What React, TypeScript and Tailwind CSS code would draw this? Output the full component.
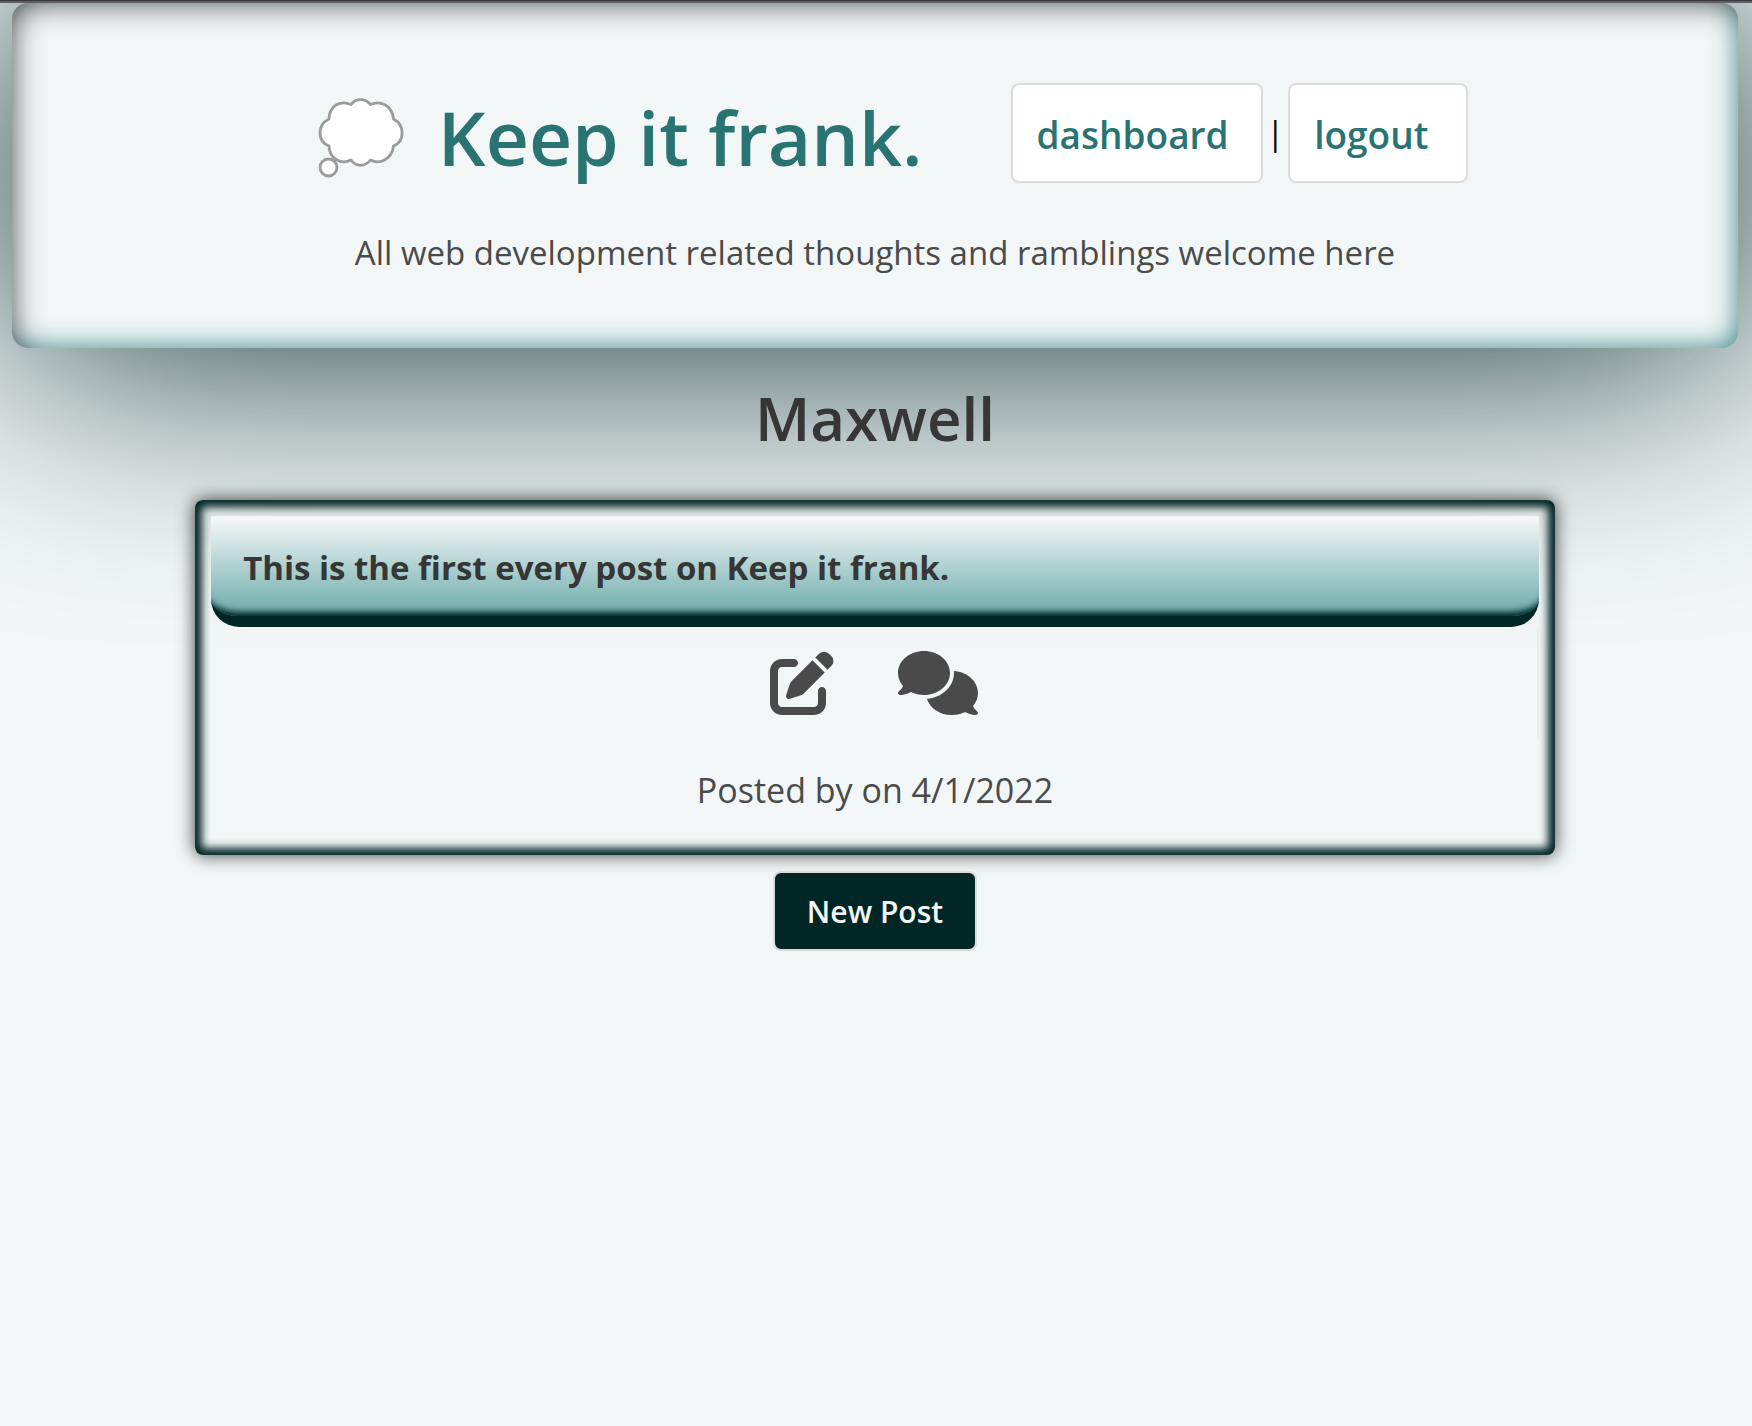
import React from "react";
import { FaComments, FaPenToSquare } from "react-icons/fa6";

function ThoughtCloud() {
  return (
    <svg viewBox="0 0 86 80" className="h-20 w-[86px] shrink-0" role="img" aria-label="thought balloon">
      <g fill="#fff" stroke="#9b9b9b" strokeWidth="2.8" strokeLinejoin="round">
        <path d="M33 6.500C38 0 47 0 52.500 6.500C62 2 74 7 75.500 21C87 27 87 43 75.500 48C74 61 62 67 52.500 62C47 69 38 69 33 62C23 67 11.500 61 11 48C-1 43-1 27 11 21C11.500 7 23 2 33 6.500Z" />
        <ellipse cx="10.500" cy="69.500" rx="8.500" ry="8.500" />
      </g>
    </svg>
  );
}

function NavLink({ children }: { children: React.ReactNode }) {
  return (
    <a
      href="#"
      className="min-w-[180px] rounded-lg border-2 border-[#dbdbdb] bg-white pt-6 pr-8 pb-5 pl-6 text-[37px] leading-[52px] font-semibold text-[#297373]"
    >
      {children}
    </a>
  );
}

function Header() {
  return (
    <header className="relative mx-3">
      <div className="absolute inset-0 bg-[#012626] blur-[125px]" aria-hidden="true" />
      <div className="relative rounded-2xl bg-[#f2f6f7] px-12 pt-20 pb-[71px] shadow-[inset_20px_0_30px_-16px_rgba(0,0,0,0.45),inset_0_20px_30px_-16px_rgba(0,0,0,0.45),inset_-20px_0_26px_-16px_rgba(96,164,165,0.8),inset_0_-20px_26px_-16px_rgba(96,164,165,0.8)]">
        <div className="flex items-start justify-center gap-[34px] pl-9">
          <div className="mt-[15px]">
            <ThoughtCloud />
          </div>
          <h1 className="mr-[54px] text-[75px] leading-[108px] font-semibold text-[#297373]">Keep it frank.</h1>
          <nav className="flex items-center gap-1 text-[32px] text-black">
            <NavLink>dashboard</NavLink>
            <span>|</span>
            <NavLink>logout</NavLink>
          </nav>
        </div>
        <p className="mt-[38px] text-center text-[33px] leading-[48px] text-[#4a4a4a]">
          All web development related thoughts and ramblings welcome here
        </p>
      </div>
    </header>
  );
}

function PostCard() {
  return (
    <article className="w-[77.7%] rounded-lg p-4 text-[#4a4a4a] shadow-[0_0_18px_rgba(0,0,0,0.75),inset_0_0_8px_7px_#012626]">
      <h2 className="rounded-b-[28px] border-b-[11px] border-[#012626] bg-linear-to-b from-[#f2f6f7] from-4% to-[#68aaaa] px-8 pt-7 pb-6 text-[33px] leading-[48px] font-bold text-[#363636] shadow-[inset_0_-12px_6px_-8px_#012626]">
        This is the first every post on Keep it frank.
      </h2>
      <div className="flex h-28 items-start justify-center gap-16 border-r-2 border-[#eaecee] pt-6">
        <a href="#" aria-label="Edit post">
          <FaPenToSquare className="size-16" />
        </a>
        <a href="#" aria-label="Comments">
          <FaComments className="h-16 w-20" />
        </a>
      </div>
      <p className="pt-[29px] pb-[27px] text-center text-[34px] leading-[44px]">Posted by on 4/1/2022</p>
    </article>
  );
}

export default function App() {
  return (
    <div className="min-h-screen overflow-hidden bg-[#f2f6f7] pr-0.5 font-['Open_Sans','Noto_Sans',sans-serif]">
      <div className="relative z-10 -mr-0.5 h-[3px] border-t border-[#38373c] bg-[#5f5e63]" />
      <Header />
      <main className="relative flex flex-col items-center">
        <h2 className="mt-[34px] mb-[46px] text-[60px] leading-[72px] font-semibold text-[#363636]">Maxwell</h2>
        <PostCard />
        <button className="mt-4 rounded-lg border-2 border-[#dbdbdb] bg-[#012626] px-8 pt-[17px] pb-[15px] text-[30px] leading-[44px] font-semibold text-[#f2f6f7]">
          New Post
        </button>
      </main>
    </div>
  );
}
